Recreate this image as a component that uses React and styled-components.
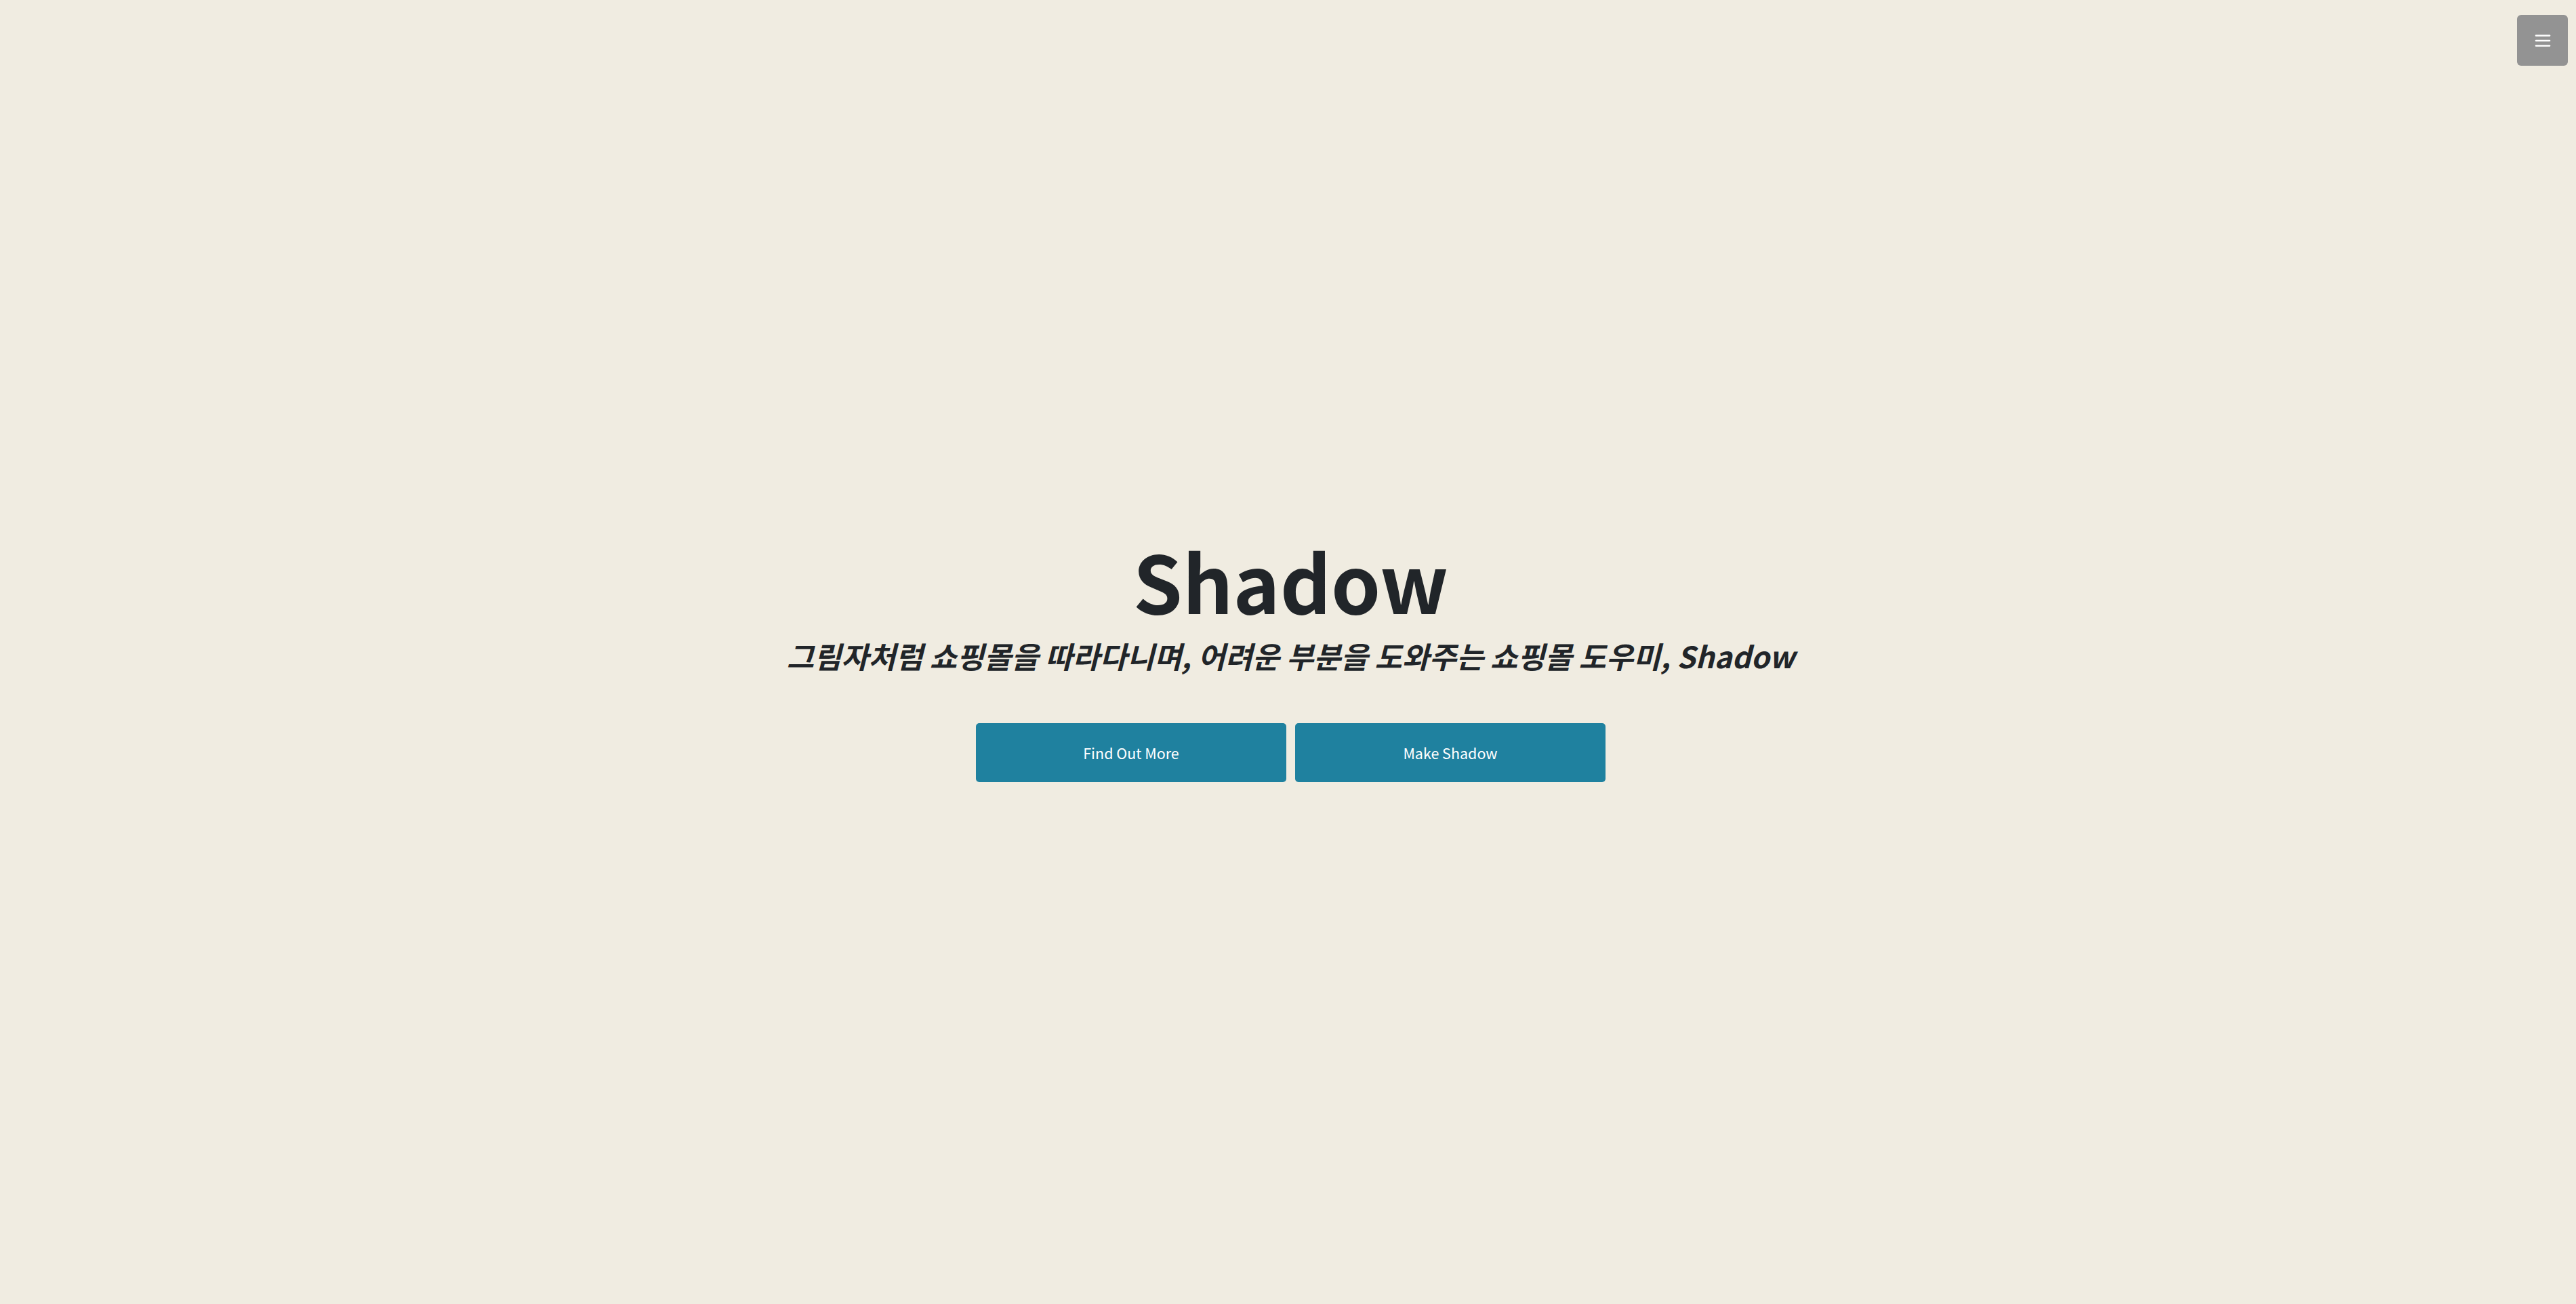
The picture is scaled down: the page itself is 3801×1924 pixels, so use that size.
import styled, { createGlobalStyle } from "styled-components";

const GlobalStyle = createGlobalStyle`
    html, body {
        margin: 0;
        padding: 0;
        background-color: #f0ece1;
    }
    body {
        font-family: "Noto Sans CJK KR", "Noto Sans", sans-serif;
        color: #212529;
    }
`;

const App = () => {
    return(
        <>
            <GlobalStyle />
            <Masthead>
                <MenuToggle aria-label="menu">
                    <svg width="24" height="20" viewBox="0 0 24 20">
                        <g stroke="#ffffff" strokeWidth="2.6" strokeLinecap="round">
                            <line x1="2" y1="2.5" x2="22" y2="2.5" />
                            <line x1="2" y1="10" x2="22" y2="10" />
                            <line x1="2" y1="17.5" x2="22" y2="17.5" />
                        </g>
                    </svg>
                </MenuToggle>
                <Hero>
                    <Title>Shadow</Title>
                    <Subtitle>그림자처럼 쇼핑몰을 따라다니며, 어려운 부분을 도와주는 쇼핑몰 도우미, Shadow</Subtitle>
                    <Actions>
                        <ActionButton>Find Out More</ActionButton>
                        <ActionButton>Make Shadow</ActionButton>
                    </Actions>
                </Hero>
            </Masthead>
        </>
    )
};

const Masthead = styled.header`
    position: relative;
    min-height: 100vh;
    box-sizing: border-box;
    display: flex;
    align-items: center;
    justify-content: center;
    text-align: center;
    padding-left: 8px;
`;

const MenuToggle = styled.button`
    position: absolute;
    top: 22px;
    right: 12px;
    width: 75px;
    height: 75px;
    border: none;
    border-radius: 6px;
    background-color: #939393;
    display: flex;
    align-items: center;
    justify-content: center;
    padding: 0;
    cursor: pointer;
`;

const Hero = styled.div`
    display: flex;
    flex-direction: column;
    align-items: center;
`;

const Title = styled.h1`
    margin: 0;
    font-size: 117px;
    font-weight: 700;
    line-height: 1.46;
`;

const Subtitle = styled.p`
    margin: 0 0 73px;
    font-size: 43.7px;
    font-weight: 700;
    font-style: italic;
    line-height: 1.2;
`;

const Actions = styled.div`
    display: flex;
    gap: 13px;
`;

const ActionButton = styled.a`
    display: flex;
    align-items: center;
    justify-content: center;
    width: 458px;
    height: 87px;
    box-sizing: border-box;
    background-color: #1f819f;
    color: #ffffff;
    font-size: 21.5px;
    border-radius: 5px;
    cursor: pointer;
`;

export default App;
